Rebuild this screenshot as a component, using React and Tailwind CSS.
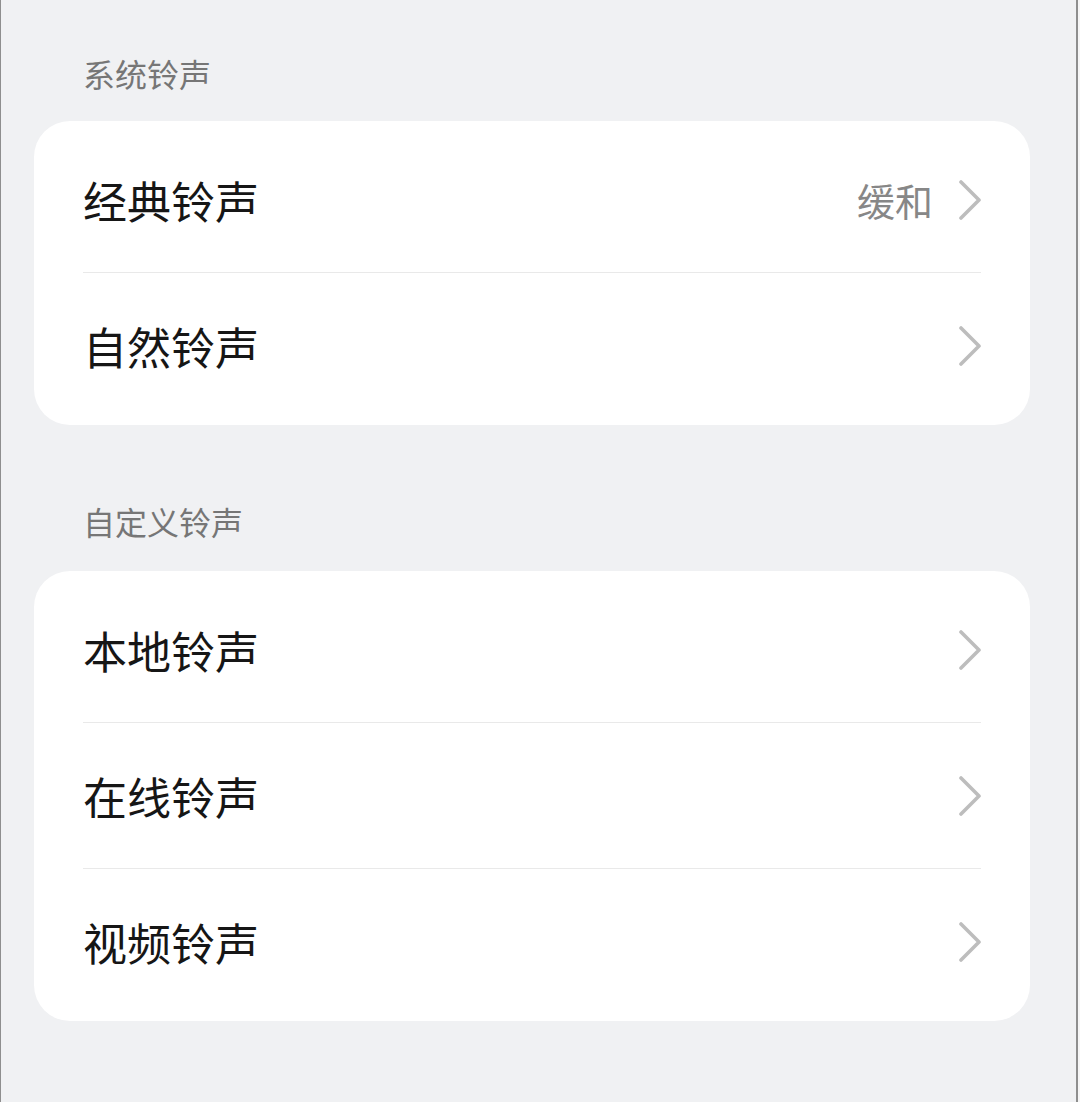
import React from 'react';

const font = '"Noto Sans CJK SC", "Noto Sans", sans-serif';

const sections = [
    {
        title: '系统铃声',
        first: true,
        items: [
            { label: '经典铃声', value: '缓和' },
            { label: '自然铃声' },
        ],
    },
    {
        title: '自定义铃声',
        items: [
            { label: '本地铃声' },
            { label: '在线铃声' },
            { label: '视频铃声' },
        ],
    },
];

function Chevron() {
    return (
        <svg width="26" height="44" viewBox="0 0 26 44" fill="none" className="shrink-0">
            <polyline
                points="6,4 24,22 6,40"
                stroke="#bdbdbd"
                strokeWidth="3.6"
                strokeLinecap="round"
                strokeLinejoin="round"
            />
        </svg>
    );
}

export default function App() {
    return (
        <div className="w-[1080px] h-[1102px] bg-[#f6f6f6] pr-[2px]" style={{ fontFamily: font }}>
            <div className="h-full bg-[#f0f1f3] border-l border-r-2 border-[#8e8e8e] pl-[33px] pr-[46px]">
                {sections.map((section) => (
                    <div key={section.title}>
                        <div
                            className={
                                (section.first ? 'pt-[53px] pb-[27px]' : 'pt-[76px] pb-[29px]') +
                                ' pl-[49px] text-[32px] leading-[41px] text-[#767676]'
                            }
                        >
                            {section.title}
                        </div>
                        <div className="bg-white rounded-[36px] py-[6px] px-[49px]">
                            {section.items.map((item, i) => (
                                <div
                                    key={item.label}
                                    className={
                                        'h-[146px] flex items-center' +
                                        (i < section.items.length - 1 ? ' border-b border-[#e9e9e9]' : '')
                                    }
                                >
                                    <span className="flex-1 text-[44px] leading-none text-[#161616] font-normal">
                                        {item.label}
                                    </span>
                                    {item.value && (
                                        <span className="text-[38px] leading-none text-[#878787] mr-[22px]">
                                            {item.value}
                                        </span>
                                    )}
                                    <Chevron />
                                </div>
                            ))}
                        </div>
                    </div>
                ))}
            </div>
        </div>
    );
}
